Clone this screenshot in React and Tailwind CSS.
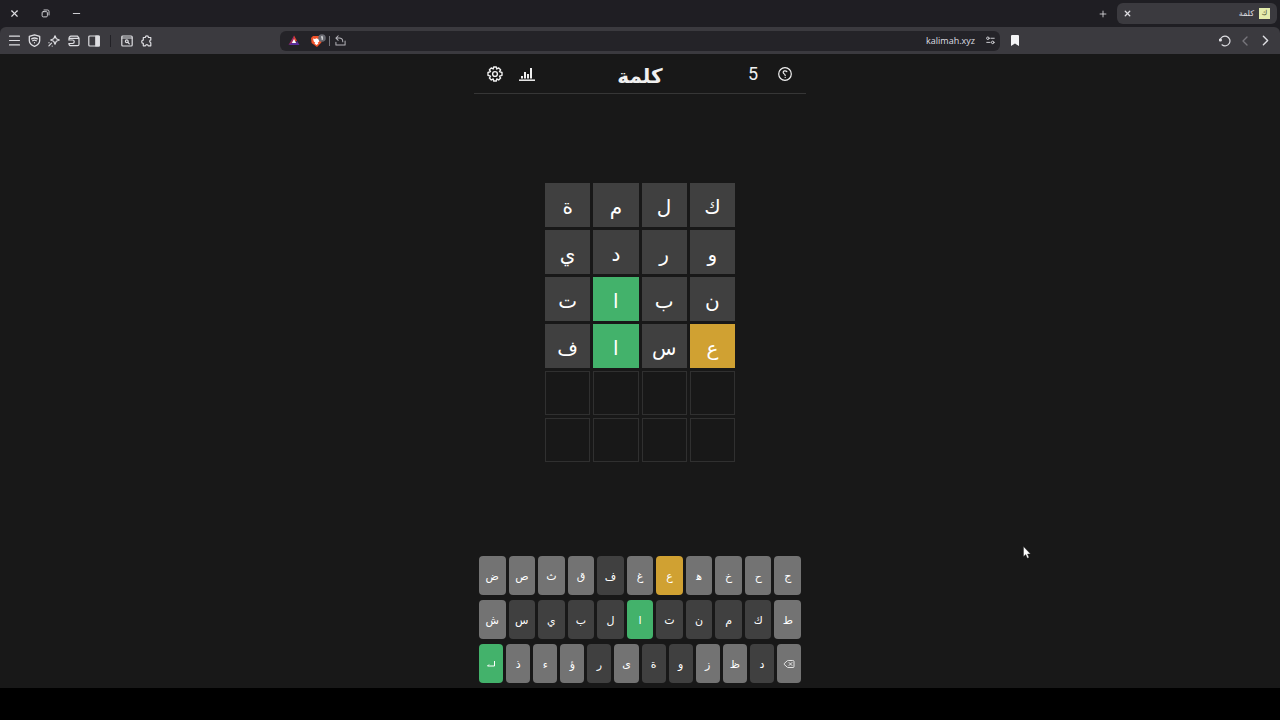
import { Menu, X, Plus, Minus, ChevronLeft, ChevronRight, Delete } from 'lucide-react';

const ROWS = 6;
const COLS = 4;

const guesses = [
    { word: 'كلمة', marks: 'aaaa' },
    { word: 'وردي', marks: 'aaaa' },
    { word: 'نبات', marks: 'aaca' },
    { word: 'عساف', marks: 'paca' },
];

const keyRows = ['جحخهعغفقثصض', 'طكمنتالبيسش', 'دظزوةىرؤءذ'];

const tileColors = {
    a: 'bg-[#404040]',
    c: 'bg-[#43b26b]',
    p: 'bg-[#d0a132]',
};

// best mark seen so far for each letter
const keyMarks = {};
guesses.forEach(({ word, marks }) => {
    [...word].forEach((ch, i) => {
        if (keyMarks[ch] !== 'c') keyMarks[ch] = marks[i];
    });
});

function IconButton({ label, className = '', children }) {
    return (
        <button type="button" aria-label={label} className={`flex h-5 w-5 items-center justify-center ${className}`}>
            {children}
        </button>
    );
}

function Stroke({ size = 12, width = 1.2, children }) {
    return (
        <svg width={size} height={size} viewBox="0 0 12 12" fill="none" stroke="currentColor" strokeWidth={width} strokeLinecap="round" strokeLinejoin="round">
            {children}
        </svg>
    );
}

function TabBar() {
    return (
        <div className="flex h-[27px] items-center justify-between bg-[#1f1e23] pr-[3px] pl-1 text-[#dedee2]">
            <div className="flex gap-[11px]">
                <IconButton label="Close window"><X size={11} strokeWidth={2.5} /></IconButton>
                <IconButton label="Restore window">
                    <Stroke size={9}>
                        <rect x="1.5" y="3.5" width="7" height="7" rx="1.5" />
                        <path d="M4 1.3h4.7a2 2 0 0 1 2 2V8" />
                    </Stroke>
                </IconButton>
                <IconButton label="Minimize window"><Minus size={11} strokeWidth={2} /></IconButton>
            </div>
            <div className="flex items-center gap-1">
                <IconButton label="New tab"><Plus size={10} strokeWidth={2} /></IconButton>
                <div className="flex h-[21px] w-40 items-center justify-between rounded-md bg-[#3b3a3f] pr-[7px]">
                    <IconButton label="Close tab"><X size={9} strokeWidth={3.5} /></IconButton>
                    <div className="flex items-center gap-[5px]">
                        <span className="text-[8px]">كلمة</span>
                        <span className="flex h-[11px] w-[11px] items-center justify-center bg-[#e4ecac] text-[7px] text-[#4c5030]">ك</span>
                    </div>
                </div>
            </div>
        </div>
    );
}

function Toolbar() {
    return (
        <div className="flex h-[27px] items-center rounded-t-md bg-[#3b3a3f] text-[#dedee2]">
            <div className="flex w-7/32 items-center pl-1">
                <IconButton label="Menu"><Menu size={15} strokeWidth={1.8} /></IconButton>
                <IconButton label="VPN">
                    <Stroke size={13}>
                        <path d="M6 .8 10.8 2.3V6c0 2.6-2 4.2-4.8 5.4C3.2 10.2 1.2 8.6 1.2 6V2.3Z" />
                        <path d="M3.4 4.5q2.6-1.6 5.2 0M4.3 6.2q1.7-1 3.4 0M6 8v.1" />
                    </Stroke>
                </IconButton>
                <IconButton label="Leo">
                    <Stroke size={12}>
                        <path d="M7 .8 8.3 3.7 11.3 5 8.3 6.3 7 9.3 5.7 6.3 2.7 5 5.7 3.7Z" />
                        <path d="M3.5 8.2.9 10.8M1 7.7v.1M4.2 11v.1" />
                    </Stroke>
                </IconButton>
                <IconButton label="Wallet">
                    <Stroke size={12}>
                        <path d="M1 5V3.500Q1 1.200 3 1.200h6.500l1.500 2v6q0 1.500-1.500 1.500H3Q1 10.700 1 9V8.500M2 3.300h9M.8 5h3.700a1.700 1.700 0 0 1 0 3.500H.8" />
                    </Stroke>
                </IconButton>
                <IconButton label="Sidebar">
                    <Stroke size={12}>
                        <rect x=".8" y="1" width="10.4" height="10" rx="1" />
                        <path d="M7.800 1h3.400v10H7.800Z" fill="currentColor" />
                    </Stroke>
                </IconButton>
                <span className="mx-[6px] h-3 w-px bg-[#222126]" />
                <IconButton label="Search tabs">
                    <Stroke size={12}>
                        <rect x=".8" y="1" width="10.4" height="10" rx="1" />
                        <path d="M1 3h10" /><circle cx="5.8" cy="6.3" r="1.400" /><path d="m7 7.500 1.300 1.300" />
                    </Stroke>
                </IconButton>
                <IconButton label="Extensions">
                    <Stroke size={12}>
                        <path d="M2.300 2.500h2a1.600 1.600 0 0 1 3.200 0h2.300v2.400a1.500 1.500 0 0 0 0 2.900v3H7.300a1.500 1.500 0 0 0-2.900 0H2.300V8.300a1.600 1.600 0 0 1 0-3.200Z" />
                    </Stroke>
                </IconButton>
            </div>
            <div className="flex h-5 w-9/16 items-center justify-between rounded-md bg-[#242328] px-1">
                <div className="flex items-center">
                    <IconButton label="Rewards">
                        <svg width="12" height="11" viewBox="0 0 12 11">
                            <path d="M6 .5 9 5.7 6 7Z" fill="#e0402f" />
                            <path d="M6 .5 3 5.7.5 10 6 7Z" fill="#a02a60" />
                            <path d="M.5 10h11L9 5.7 8 8H4Z" fill="#5b2d9c" />
                            <path d="M6 4 8.2 8H3.8Z" fill="#fff" />
                        </svg>
                    </IconButton>
                    <IconButton label="Shields" className="ml-1">
                        <svg width="16" height="14" viewBox="1 0 16 14">
                            <path d="M4 2h7l2 2-.6 4.500L8 13 2.600 9 2 4Z" fill="#ef5229" />
                            <path d="m4 4.500 2 .4 1.500-.7 1.500.7 2-.4-.8 3L8.700 8.800l.8.800L7.500 11l-2-1.400.8-.8L4.800 7.500Z" fill="#fff" />
                            <circle cx="13" cy="4" r="3.800" fill="#686970" />
                            <path d="m12.200 3.200 1-.8v3.400" fill="none" stroke="#fff" />
                        </svg>
                    </IconButton>
                    <span className="ml-px h-[10px] w-px bg-[#77767c]" />
                    <IconButton label="Share" className="text-[#b5b4ba]">
                        <Stroke size={11} width={1.1}>
                            <path d="M3.500.8 1 3.300l2.500 2.500M1 3.300h3.500C7 3.300 8.500 5 8.500 7.300M1 8v3h10V6.500" />
                        </Stroke>
                    </IconButton>
                </div>
                <div className="flex items-center gap-[5px]">
                    <span className="font-['Open_Sans',sans-serif] text-[9px]">kalimah.xyz</span>
                    <IconButton label="Site settings" className="-mr-1">
                        <Stroke size={9}>
                            <circle cx="2.5" cy="3" r="1.7" /><path d="M6.500 3h4.500" />
                            <circle cx="9" cy="8.5" r="1.7" /><path d="M1 8.500h4.500" />
                        </Stroke>
                    </IconButton>
                </div>
            </div>
            <div className="flex w-7/32 items-center justify-between px-[5px]">
                <IconButton label="Bookmark">
                    <svg width="8" height="11" viewBox="0 0 8 11"><path d="M0 1q0-1 1-1h6q1 0 1 1v10L4 8.500 0 11Z" fill="#f4f4f6" /></svg>
                </IconButton>
                <div className="flex">
                    <IconButton label="Reload">
                        <Stroke size={12}>
                            <path d="M1.200 5.200A4.900 4.900 0 1 1 3 9.800" /><circle cx="1.400" cy="5" r="1" fill="currentColor" />
                        </Stroke>
                    </IconButton>
                    <IconButton label="Forward" className="text-[#77767c]"><ChevronLeft size={16} strokeWidth={2} /></IconButton>
                    <IconButton label="Back"><ChevronRight size={17} strokeWidth={2} /></IconButton>
                </div>
            </div>
        </div>
    );
}

function Header() {
    return (
        <header className="grid h-10 w-full max-w-[332px] grid-cols-3 items-center border-b border-[#363636] px-[11px] text-[#f0f0f0]">
            <div className="flex gap-3">
                <IconButton label="الإعدادات">
                    <svg width="16" height="16" viewBox="0 0 16 16" fill="none" stroke="currentColor" strokeWidth="1.400" strokeLinejoin="round">
                        <path d="M6.700 1h2.600l.5 2 1.900-1.100 1.900 1.900L12.500 5.700l2.500.8v2.800l-2.500.8 1.100 2-1.900 1.900-1.900-1.100-.5 2.100H6.700l-.5-2.100L4.300 14l-1.900-1.900 1.100-2L1 9.300V6.500l2.500-.8L2.400 3.800l1.900-1.900L6.200 3Z" />
                        <circle cx="8" cy="8" r="2.400" />
                    </svg>
                </IconButton>
                <IconButton label="الإحصائيات">
                    <svg width="16" height="14" viewBox="0 0 16 14" fill="none" stroke="currentColor" strokeWidth="2">
                        <path d="M0 13.200h16" strokeWidth="1.500" /><path d="M3 11.500V9M6 11.500V5M9 11.500V7M12 11.500V1" />
                    </svg>
                </IconButton>
            </div>
            <h1 className="pt-1 text-center text-xl leading-8 font-bold">كلمة</h1>
            <div className="flex items-center justify-end gap-3">
                <span className="w-5 text-center font-[Roboto,sans-serif] text-lg">5</span>
                <IconButton label="مساعدة">
                    <svg width="14" height="14" viewBox="0 0 14 14" fill="none" stroke="currentColor" strokeWidth="1.200" strokeLinecap="round">
                        <circle cx="7" cy="7" r="6.3" />
                        <path d="M8.800 4.500C7.500 3.200 5 3.800 5.200 5.500 5.400 7 7.200 6.800 7.200 8.400M7.200 10.400v.1" />
                    </svg>
                </IconButton>
            </div>
        </header>
    );
}

function Board() {
    return (
        <div dir="rtl" className="grid w-[190px] grid-cols-4 gap-[3px]">
            {Array.from({ length: ROWS * COLS }, (_, i) => {
                const guess = guesses[Math.floor(i / COLS)];
                const col = i % COLS;
                if (!guess) return <div key={i} className="h-11 border border-[#303030]" />;
                return (
                    <div key={i} className={`flex h-11 items-center justify-center pt-1 text-xl text-white ${tileColors[guess.marks[col]]}`}>
                        {guess.word[col]}
                    </div>
                );
            })}
        </div>
    );
}

function Key({ label, color, children }) {
    return (
        <button type="button" aria-label={label} className={`flex h-[39px] min-w-0 flex-1 items-center justify-center rounded text-[11px] text-white ${color}`}>
            {children}
        </button>
    );
}

function Keyboard() {
    return (
        <div dir="rtl" className="flex w-full max-w-[332px] flex-col gap-[5px] px-[5px] pb-[5px]">
            {keyRows.map((row, r) => (
                <div key={row} className="flex gap-[3px]">
                    {r === 2 && <Key label="حذف" color="bg-[#737373]"><Delete size={12} strokeWidth={1.6} /></Key>}
                    {[...row].map((ch) => (
                        <Key key={ch} label={ch} color={tileColors[keyMarks[ch]] || 'bg-[#737373]'}>
                            {/* the joiner gives heh its initial form */}
                            <span className="pt-[3px]">{ch === 'ه' ? 'ه\u200d' : ch}</span>
                        </Key>
                    ))}
                    {r === 2 && (
                        <Key label="إدخال" color="bg-[#43b26b]">
                            <svg width="10" height="8" viewBox="0 0 10 8" fill="none" stroke="currentColor" strokeWidth="1">
                                <path d="M8.500 1v5H1.500M3 4.500 1.500 6" />
                            </svg>
                        </Key>
                    )}
                </div>
            ))}
        </div>
    );
}

export default function App() {
    return (
        <div className="relative flex min-h-screen flex-col bg-[#1f1e23] font-['DejaVu_Sans',sans-serif]">
            <TabBar />
            <Toolbar />
            <main className="flex flex-1 flex-col items-center bg-[#181818]">
                <Header />
                <div className="flex flex-1 items-center pb-1.5"><Board /></div>
                <Keyboard />
            </main>
            <footer className="h-8 bg-black" />
            <svg className="absolute top-[546px] left-[1023px]" width="8" height="13" viewBox="0 0 8 13">
                <path d="M.5.5v10l2.300-2 1.500 3.700 1.700-.7L4.500 8h3Z" fill="#fff" stroke="#222" strokeWidth=".4" />
            </svg>
        </div>
    );
}
